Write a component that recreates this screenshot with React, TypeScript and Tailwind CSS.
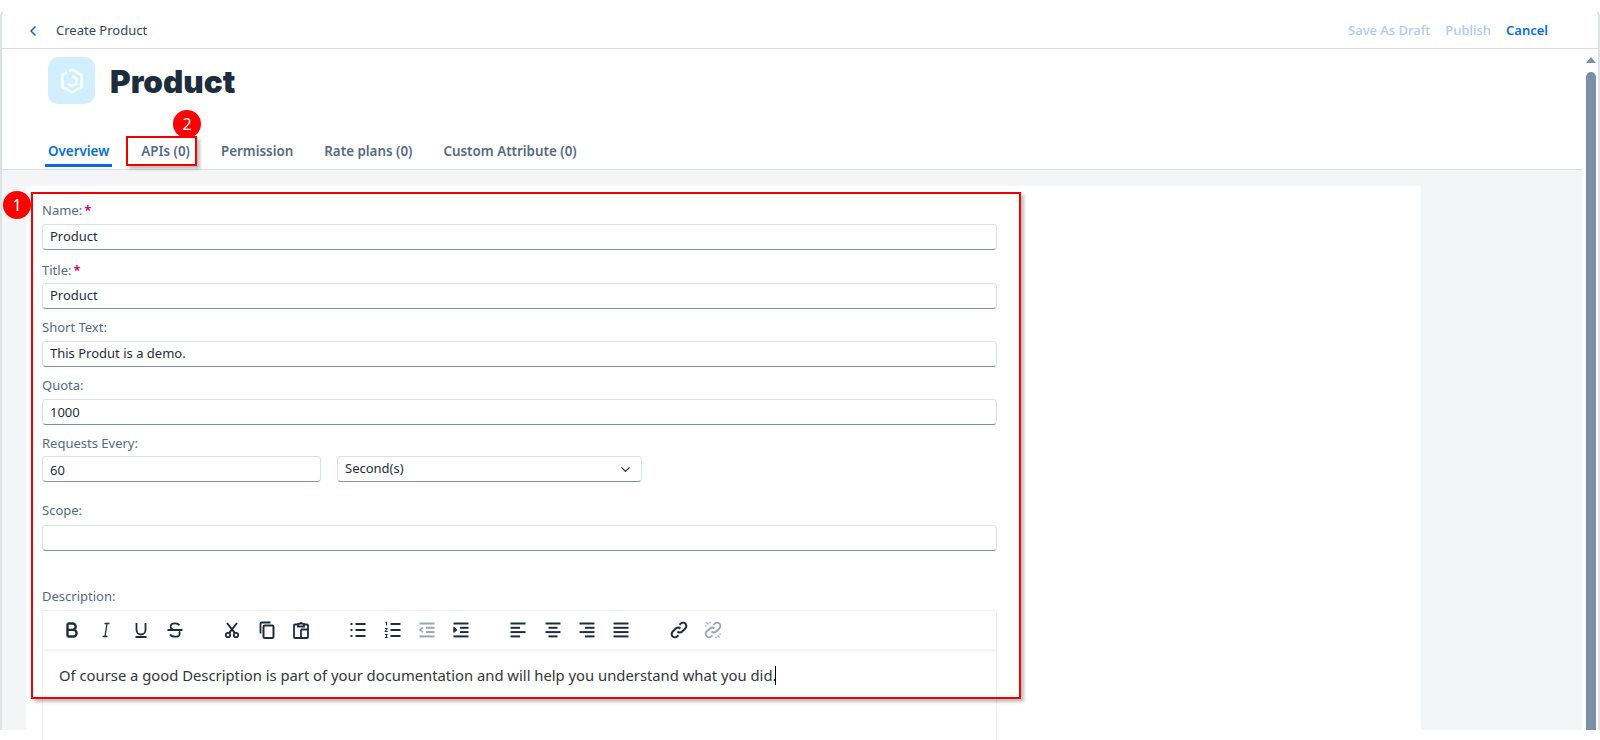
import type { ReactNode } from 'react';
import { ChevronDown, ChevronLeft } from 'lucide-react';

const Icon = ({ children, muted = false }: { children: ReactNode; muted?: boolean }) => (
  <span className="flex h-[34px] w-[34.3px] items-center justify-center">
    <svg
      width="18"
      height="18"
      viewBox="0 0 18 18"
      fill="none"
      stroke={muted ? '#9aa5b1' : '#1d2d3e'}
      strokeWidth="1.8"
    >
      {children}
    </svg>
  </span>
);

const Lines = ({ rows }: { rows: [number, number][] }) => (
  <>
    {rows.map(([x1, x2], i) => (
      <line key={i} x1={x1} x2={x2} y1={2.5 + i * 4.3} y2={2.5 + i * 4.3} strokeWidth="2" />
    ))}
  </>
);

const toolbarGroups: ReactNode[][] = [
  [
    <Icon key="bold">
      <path d="M4.5 2.5v13M4.5 2.5h5a3.2 3.2 0 0 1 0 6.4h-5M4.5 8.9h5.8a3.3 3.3 0 0 1 0 6.6H4.5" strokeWidth="2.4" />
    </Icon>,
    <Icon key="italic">
      <path d="M7.5 2.5h5M5.5 15.5h5M10 2.5l-2 13" strokeWidth="1.3" />
    </Icon>,
    <Icon key="underline">
      <path d="M4.5 2v7a4.5 4.5 0 0 0 9 0V2M3.5 16h11" />
    </Icon>,
    <Icon key="strike">
      <path d="M13.5 4.2C12.6 2.9 11 2.3 9 2.3c-2.6 0-4.4 1.3-4.4 3.2 0 1.3.7 2.2 2 2.8M1.5 9h15M13 10.5c.5.5.7 1.2.7 1.9 0 2-1.9 3.3-4.7 3.3-2.2 0-4-.8-4.9-2.2" />
    </Icon>,
  ],
  [
    <Icon key="cut">
      <circle cx="5" cy="14" r="2.2" />
      <circle cx="13" cy="14" r="2.2" />
      <path d="M4 2l8 10.2M14 2L6 12.2" strokeWidth="2" />
    </Icon>,
    <Icon key="copy">
      <path d="M2.5 12.5v-10a1 1 0 0 1 1-1h9" />
      <rect x="5.500" y="4.500" width="10" height="12.500" rx="1.200" strokeWidth="2" />
    </Icon>,
    <Icon key="paste">
      <path d="M5.500 3.500H3a1 1 0 0 0-1 1V16a1 1 0 0 0 1 1h12a1 1 0 0 0 1-1V4.500a1 1 0 0 0-1-1h-2.500" />
      <path d="M6 5.500V2.800h1.800a1.300 1.300 0 0 1 2.400 0H12v2.700zM9 8.500h7M9 8.500V17" />
    </Icon>,
  ],
  [
    <Icon key="bullets">
      <path d="M6.500 3h10M6.500 9h10M6.500 15h10" strokeWidth="2" />
      <path d="M1.500 3h2M1.500 9h2M1.500 15h2" strokeWidth="2.200" />
    </Icon>,
    <Icon key="numbers">
      <path d="M6.500 3h10M6.500 9h10M6.500 15h10" strokeWidth="2" />
      <path d="M1.500 1.500l1-.5v3.500M1 7.500h2.500L1 10.500h2.700M1 13.500h2.500L2 15l1.500 1.500H1" strokeWidth="1" />
    </Icon>,
    <Icon key="outdent" muted>
      <Lines rows={[[1.5, 16.5], [8, 16.5], [8, 16.5], [1.5, 16.5]]} />
      <path d="M5 6.300L2 8.800l3 2.500" strokeWidth="1.500" />
    </Icon>,
    <Icon key="indent">
      <Lines rows={[[1.5, 16.5], [8, 16.5], [8, 16.5], [1.5, 16.5]]} />
      <path d="M1.800 6.200v5.200L5 8.800z" fill="#1d2d3e" strokeWidth="1" />
    </Icon>,
  ],
  [
    <Icon key="left">
      <Lines rows={[[1.5, 16.5], [1.5, 11], [1.5, 16.5], [1.5, 11]]} />
    </Icon>,
    <Icon key="center">
      <Lines rows={[[1.5, 16.5], [4.5, 13.5], [1.5, 16.5], [4.5, 13.5]]} />
    </Icon>,
    <Icon key="right">
      <Lines rows={[[1.5, 16.5], [7, 16.5], [1.5, 16.5], [7, 16.5]]} />
    </Icon>,
    <Icon key="justify">
      <Lines rows={[[1.5, 16.5], [1.5, 16.5], [1.5, 16.5], [1.5, 16.5]]} />
    </Icon>,
  ],
  [
    <Icon key="link">
      <path d="M7.500 10.500a3.300 3.300 0 0 0 4.700 0l3.200-3.200a3.300 3.300 0 0 0-4.700-4.700L9.500 3.800" strokeWidth="2" />
      <path d="M10.500 7.500a3.300 3.300 0 0 0-4.700 0l-3.200 3.200a3.300 3.300 0 0 0 4.700 4.700l1.200-1.200" strokeWidth="2" />
    </Icon>,
    <Icon key="unlink" muted>
      <path d="M7.500 10.500a3.300 3.300 0 0 0 4.700 0l3.200-3.200a3.300 3.300 0 0 0-4.700-4.700L9.500 3.800" />
      <path d="M10.500 7.500a3.300 3.300 0 0 0-4.700 0l-3.200 3.200a3.300 3.300 0 0 0 4.700 4.700l1.200-1.200" />
      <path d="M2.500 1.500l2 2M6 .8v1.700M1 5h1.700M15.500 16.500l-2-2M12 17.200v-1.700M17 13h-1.700" strokeWidth="1.200" />
    </Icon>,
  ],
];

const Input = ({ value, className = '' }: { value: string; className?: string }) => (
  <div
    className={`flex h-[26px] items-center rounded-[4px] border border-[#d9e0e6] border-b-[#7c90a6] px-[7px] text-[13px] text-[#1d2d3e] ${className}`}
  >
    {value}
  </div>
);

const Field = ({
  label,
  value = '',
  required = false,
  className = '',
  inputClassName = 'mt-[5px]',
}: {
  label: string;
  value?: string;
  required?: boolean;
  className?: string;
  inputClassName?: string;
}) => (
  <div className={className}>
    <div className="flex h-[17px] items-center text-[13px] leading-[17px] text-[#556b82]">
      {label}
      {required && <span className="ml-[2px] font-bold text-[#c4127e]">*</span>}
    </div>
    <Input value={value} className={inputClassName} />
  </div>
);

const tabs = ['APIs (0)', 'Permission', 'Rate plans (0)', 'Custom Attribute (0)'];

export default function App() {
  return (
    <div className="relative h-[740px] w-[1600px] overflow-hidden bg-white font-['Noto_Sans','Open_Sans',sans-serif]">
      <div className="flex h-[730px] flex-col pt-[10px]">
        <div className="flex min-h-0 flex-1 flex-col rounded-t-[6px] border-x-2 border-x-[#dfe3e8]">
          {/* Header */}
          <header className="flex h-[39px] shrink-0 items-center border-b border-[#d9dde2] pl-[23px] pr-[50px] pt-[4px] text-[13px]">
            <ChevronLeft className="h-[16px] w-[16px] text-[#0a6ed1]" strokeWidth={2.5} />
            <span className="ml-[15px] text-[#36465a]">Create Product</span>
            <span className="ml-auto font-medium text-[#a9cdf5]">Save As Draft</span>
            <span className="ml-[15px] font-medium text-[#a9cdf5]">Publish</span>
            <span className="ml-[15px] font-semibold text-[#0a6ed1]">Cancel</span>
          </header>

          <div className="flex min-h-0 flex-1">
            <div className="flex min-w-0 flex-1 flex-col">
              {/* Object title and tabs */}
              <div className="h-[121px] shrink-0 border-b border-[#dcdfe3] shadow-[0_1px_2px_rgba(0,0,0,0.08)]">
                <div className="flex items-center pl-[46px] pt-[8px]">
                  <div className="flex h-[47px] w-[47px] items-center justify-center rounded-[10px] bg-[#d1efff]">
                    <svg width="24" height="26" viewBox="0 0 24 26" fill="none" stroke="#f4fbff" strokeWidth="2.8">
                      <path d="M9 3l3-1.500 9.500 5.500v12L12 24.500 2.500 19V7L7 4.500" />
                      <path d="M12 8l4.500 2.600v5L12 18l-4-2.400" />
                    </svg>
                  </div>
                  <h1 className="ml-[15px] pt-[3px] font-['Inter',sans-serif] text-[31.5px] font-black leading-[40px] text-[#1d2d3e]">
                    Product
                  </h1>
                </div>
                <nav className="mt-[35px] flex items-start pl-[46px] text-[13.4px] font-semibold text-[#556b82]">
                  <span className="-ml-[3px] h-[28px] border-b-[3px] border-[#0a6ed1] px-[3px] leading-[24px] text-[#0a6ed1]">
                    Overview
                  </span>
                  {tabs.map((tab, i) => (
                    <span key={tab} className={`leading-[24px] ${i === 0 ? 'ml-[29px]' : 'ml-[31px]'}`}>
                      {tab}
                    </span>
                  ))}
                </nav>
              </div>

              {/* Form */}
              <main className="min-h-0 flex-1 bg-[#f3f5f7] pl-[24px] pr-[161px] pt-[16px]">
                <div className="h-full bg-white pl-[16px] pr-[424px] pt-[16px]">
                  <Field label="Name:" value="Product" required />
                  <Field label="Title:" value="Product" required className="mt-[12px]" inputClassName="mt-[4px]" />
                  <Field label="Short Text:" value="This Produt is a demo." className="mt-[10px]" />
                  <Field label="Quota:" value="1000" className="mt-[10px]" inputClassName="mt-[5px] pt-[2px]" />
                  <div className="mt-[10px] h-[17px] text-[13px] leading-[17px] text-[#556b82]">Requests Every:</div>
                  <div className="mt-[4px] flex gap-[16px]">
                    <Input value="60" className="w-[279px] pt-[3px]" />
                    <div className="flex h-[26px] w-[305px] items-center justify-between rounded-[4px] border border-[#d9e0e6] border-b-[#7c90a6] pl-[7px] pr-[8px] text-[13px] text-[#1d2d3e]">
                      Second(s)
                      <ChevronDown className="h-[15px] w-[15px] text-[#1d2d3e]" strokeWidth={2} />
                    </div>
                  </div>
                  <Field label="Scope:" className="mt-[20px]" inputClassName="mt-[6px]" />
                  <div className="mt-[37px] h-[17px] text-[13px] leading-[17px] text-[#556b82]">Description:</div>
                  <div className="mt-[5px] h-[200px] border border-[#eef0f2]">
                    <div className="flex h-[38px] items-center pl-[12px] shadow-[0_2px_4px_rgba(0,0,0,0.06)]">
                      {toolbarGroups.map((group, i) => (
                        <div key={i} className="mr-[23px] flex">
                          {group}
                        </div>
                      ))}
                    </div>
                    <div className="px-[16px] pt-[13px] text-[14.8px] leading-[22px] text-[#32363a]">
                      Of course a good Description is part of your documentation and will help you understand what you did.
                      <span className="ml-[-1px] inline-block h-[19px] w-px translate-y-[4px] bg-black" />
                    </div>
                  </div>
                </div>
              </main>
            </div>

            {/* Scrollbar */}
            <div className="flex w-[16px] shrink-0 flex-col items-center bg-white pl-[2px]">
              <div className="mt-[8px] h-0 w-0 border-x-[5px] border-b-[6px] border-x-transparent border-b-[#7b90a8]" />
              <div className="mt-[9px] w-[10px] flex-1 rounded-t-[5px] bg-[#7b90a8]" />
            </div>
          </div>
        </div>
      </div>

      {/* Annotations */}
      <div className="absolute left-[31px] top-[192px] h-[507px] w-[990px] border-2 border-[#f00000] shadow-[3px_3px_3px_rgba(0,0,0,0.25)]" />
      <div className="absolute left-[126px] top-[136px] h-[30px] w-[71px] border-2 border-[#f00000] shadow-[3px_3px_3px_rgba(0,0,0,0.25)]" />
      <div className="absolute left-[3px] top-[191px] flex h-[28px] w-[28px] items-center justify-center rounded-full bg-[#ff0000] text-[16px] text-white">1</div>
      <div className="absolute left-[173px] top-[110px] flex h-[28px] w-[28px] items-center justify-center rounded-full bg-[#ff0000] text-[16px] text-white">2</div>
    </div>
  );
}
